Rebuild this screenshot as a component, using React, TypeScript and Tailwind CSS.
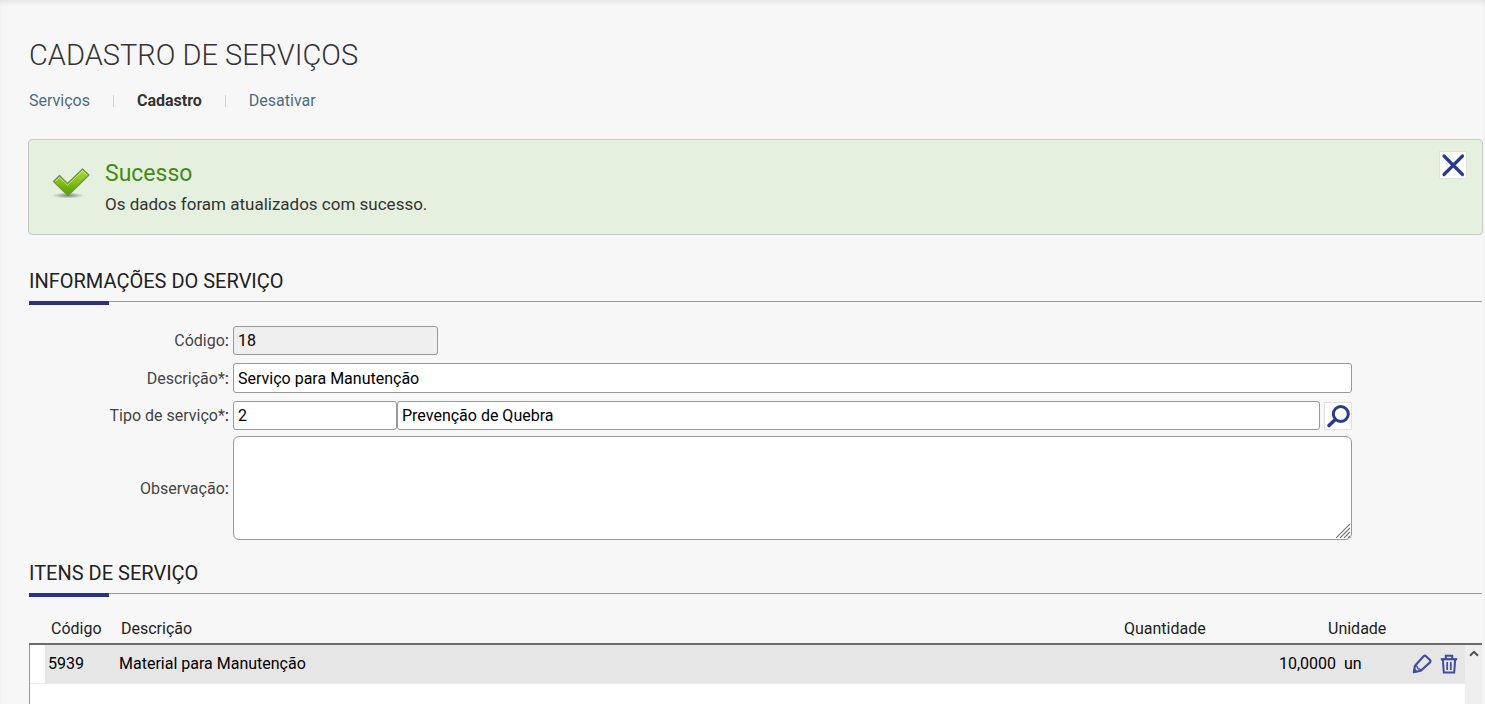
import { useState } from "react";

const tabs = [
  { label: "Serviços", active: false },
  { label: "Cadastro", active: true },
  { label: "Desativar", active: false },
];

const items = [
  { code: "5939", description: "Material para Manutenção", quantity: "10,0000", unit: "un" },
];

const inputClass =
  "rounded-[3px] border border-[#999] bg-white px-1 text-base leading-5 text-black outline-none";

function CheckIcon() {
  return (
    <svg width="40" height="34" viewBox="0 0 40 34" aria-hidden="true">
      <defs>
        <linearGradient id="check" x1="0" y1="0" x2="0" y2="1">
          <stop offset="0" stopColor="#b5dc4a" />
          <stop offset="0.5" stopColor="#84bf16" />
          <stop offset="1" stopColor="#559c05" />
        </linearGradient>
        <radialGradient id="shade">
          <stop offset="0" stopColor="#5f6b58" stopOpacity="0.8" />
          <stop offset="1" stopColor="#5f6b58" stopOpacity="0" />
        </radialGradient>
      </defs>
      <ellipse cx="17" cy="29.5" rx="16" ry="3" fill="url(#shade)" />
      <path
        d="M2.5 15.5 L8.5 9.5 L16.5 17.5 L31.5 3 L38 9 L17 29.5 Z"
        fill="url(#check)"
        stroke="#6b9645"
        strokeWidth="1.2"
        strokeLinejoin="round"
      />
      <path
        d="M4.5 15.5 L8.5 11.5 L16.5 19.2 L31.5 4.7 L36 9"
        fill="none"
        stroke="#d3ec86"
        strokeWidth="0.8"
      />
    </svg>
  );
}

function CloseIcon() {
  return (
    <svg width="26" height="26" viewBox="0 0 26 26" aria-hidden="true">
      <path
        d="M4 4 L22.5 22.5 M22.5 4 L4 22.5"
        stroke="#2b3990"
        strokeWidth="3.2"
        strokeLinecap="round"
      />
    </svg>
  );
}

function SearchIcon() {
  return (
    <svg width="26" height="26" viewBox="0 0 26 26" aria-hidden="true">
      <circle cx="15.8" cy="11" r="7.5" fill="none" stroke="#2b3990" strokeWidth="3" />
      <path d="M9.8 17 L4 22.5" stroke="#2b3990" strokeWidth="3.6" strokeLinecap="round" />
    </svg>
  );
}

function PencilIcon() {
  return (
    <svg
      width="20"
      height="20"
      viewBox="0 0 20 20"
      fill="none"
      stroke="#3f4ca0"
      strokeWidth="2.1"
      strokeLinejoin="round"
      aria-hidden="true"
    >
      <path d="M1.8 18.2 L3 11.8 L11.6 2.2 Q12.8 1.2 14 2.2 L18 6 Q19 7.2 18 8.4 L8.8 16.8 Z" />
      <path d="M3 11.8 L5.2 12.4 L5.8 14.6 L8 15.2 L8.8 16.8" strokeWidth="1.4" />
      <path d="M1.8 18.2 L2.4 14.8 L5.2 17.4 Z" fill="#3f4ca0" strokeWidth="1" />
    </svg>
  );
}

function TrashIcon() {
  return (
    <svg
      width="18"
      height="20"
      viewBox="0 0 18 20"
      fill="none"
      stroke="#3f4ca0"
      strokeWidth="2"
      aria-hidden="true"
    >
      <path d="M0.8 5.2 H17.2" strokeWidth="2.2" />
      <path d="M5.8 5 V1.8 H12.2 V5" />
      <path d="M2.8 5 L3.8 18.6 H14.2 L15.2 5" />
      <path d="M7.2 8 V16 M10.8 8 V16" strokeWidth="1.7" />
    </svg>
  );
}

function SectionTitle({ children }: { children: string }) {
  return (
    <div>
      <h2 className="text-xl leading-6 text-[#222]">{children}</h2>
      <div className="mt-2 h-1 border-t border-[#999]">
        <div className="-mt-px h-1 w-20 bg-[#2a3187]" />
      </div>
    </div>
  );
}

function Label({ htmlFor, children }: { htmlFor: string; children: string }) {
  return (
    <label htmlFor={htmlFor} className="pt-px text-right text-base leading-5 text-[#444]">
      {children}
      <b className="font-medium">:</b>
    </label>
  );
}

export default function App() {
  const [showAlert, setShowAlert] = useState(true);

  return (
    <main className="flex min-h-screen flex-col bg-[#f7f7f7] pt-[37px] pr-[2px] pl-7 font-[Roboto,sans-serif] shadow-[inset_0_4px_6px_-3px_rgba(0,0,0,0.12)]">
      <header className="pl-px">
        <h1 className="text-[29px] leading-9 font-light text-[#333]">CADASTRO DE SERVIÇOS</h1>
        <nav className="mt-[18px] flex h-5 items-center text-base leading-5">
          {tabs.map((tab, i) => (
            <div key={tab.label} className="flex items-center">
              {i > 0 && <span className="mx-[23px] h-3 w-px bg-[#d5d5d5]" />}
              <a href="#" className={tab.active ? "font-bold text-[#333]" : "text-[#4d6c80]"}>
                {tab.label}
              </a>
            </div>
          ))}
        </nav>
      </header>

      {showAlert && (
        <div
          role="status"
          className="mt-7 flex h-24 items-start rounded-sm border border-[#c6c9c4] bg-[#e5f0df] pr-[15px] pl-[22px]"
        >
          <div className="mt-[26px]">
            <CheckIcon />
          </div>
          <div className="ml-[14px] flex-1 pt-5">
            <h3 className="text-[23px] leading-7 text-[#458a14]">Sucesso</h3>
            <p className="mt-1 text-[17px] leading-6 text-[#333]">
              Os dados foram atualizados com sucesso.
            </p>
          </div>
          <button
            type="button"
            aria-label="Fechar"
            onClick={() => setShowAlert(false)}
            className="mt-[11px] border border-[#e2e2e2] bg-white"
          >
            <CloseIcon />
          </button>
        </div>
      )}

      <section className="mt-[34px] px-px">
        <SectionTitle>INFORMAÇÕES DO SERVIÇO</SectionTitle>
        <form className="mt-[21px] mr-[130px] grid grid-cols-[200px_1fr] items-center gap-x-1">
          <Label htmlFor="codigo">Código</Label>
          <input
            id="codigo"
            defaultValue="18"
            readOnly
            className="h-[29px] w-[205px] rounded-[3px] border border-[#999] bg-[#efefef] px-1 text-base leading-5 text-black outline-none"
          />

          <div className="col-span-2 mt-2 grid grid-cols-subgrid items-center">
            <Label htmlFor="descricao">Descrição*</Label>
            <input
              id="descricao"
              defaultValue="Serviço para Manutenção"
              className={`h-[30px] w-full ${inputClass}`}
            />
          </div>

          <div className="col-span-2 mt-2 grid grid-cols-subgrid items-center">
            <Label htmlFor="tipo">Tipo de serviço*</Label>
            <div className="flex items-center">
              <input id="tipo" defaultValue="2" className={`h-[29px] w-[164px] ${inputClass}`} />
              <input
                aria-label="Nome do tipo de serviço"
                defaultValue="Prevenção de Quebra"
                className={`h-[29px] min-w-0 flex-1 ${inputClass}`}
              />
              <button
                type="button"
                aria-label="Pesquisar"
                className="ml-1 border border-[#e2e2e2] bg-white"
              >
                <SearchIcon />
              </button>
            </div>
          </div>

          <div className="col-span-2 mt-[6px] grid grid-cols-subgrid items-center">
            <Label htmlFor="observacao">Observação</Label>
            <div className="relative">
              <textarea
                id="observacao"
                className="block h-[104px] w-full resize-none rounded-md border border-[#999] bg-white p-1 text-base leading-5 outline-none"
              />
              <svg
                width="14"
                height="14"
                viewBox="0 0 14 14"
                className="pointer-events-none absolute right-[2px] bottom-[2px]"
                aria-hidden="true"
              >
                <path
                  d="M0 14 L14 0 M4 14 L14 4 M8 14 L14 8 M12 14 L14 12"
                  stroke="#777"
                  strokeWidth="1.2"
                />
              </svg>
            </div>
          </div>
        </form>
      </section>

      <section className="mt-[21px] flex flex-1 flex-col px-px">
        <SectionTitle>ITENS DE SERVIÇO</SectionTitle>
        <table className="mt-[18px] w-full table-fixed text-base leading-5 text-[#222]">
          <thead>
            <tr className="h-7">
              <th className="w-[92px] pl-[22px] text-left font-normal">Código</th>
              <th className="text-left font-normal">Descrição</th>
              <th className="w-[122px] text-left font-normal">Quantidade</th>
              <th className="w-[236px] pl-[82px] text-left font-normal">Unidade</th>
            </tr>
          </thead>
        </table>
        <div className="flex min-h-14 flex-1 items-stretch border-t-2 border-[#6b6b6b]">
          <div className="flex-1 border-l border-[#999] bg-white">
            <table
              aria-label="Itens de serviço"
              className="w-full table-fixed border-b border-[#ececec] text-base leading-5 text-black"
            >
              <colgroup>
                <col className="w-[15px]" />
                <col className="w-[74px]" />
                <col />
                <col className="w-[120px]" />
                <col className="w-[60px]" />
                <col className="w-[69px]" />
              </colgroup>
              <tbody>
                {items.map((item) => (
                  <tr key={item.code} className="h-[38px]">
                    <td />
                    <td className="bg-[#e6e6e6] pl-[3px]">{item.code}</td>
                    <td className="bg-[#e6e6e6]">{item.description}</td>
                    <td className="bg-[#e6e6e6] text-right">{item.quantity}</td>
                    <td className="bg-[#e6e6e6] pl-2">{item.unit}</td>
                    <td className="bg-[#e6e6e6]">
                      <div className="flex items-center justify-end gap-2 pr-[7px]">
                        <button type="button" aria-label="Editar">
                          <PencilIcon />
                        </button>
                        <button type="button" aria-label="Excluir">
                          <TrashIcon />
                        </button>
                      </div>
                    </td>
                  </tr>
                ))}
              </tbody>
            </table>
          </div>
          <div className="flex w-[17px] justify-center bg-[#efefef]">
            <button type="button" aria-label="Rolar para cima" className="h-4">
              <svg width="10" height="7" viewBox="0 0 10 7" fill="none" aria-hidden="true">
                <path d="M1 5.8 L5 1.8 L9 5.8" stroke="#505050" strokeWidth="2" />
              </svg>
            </button>
          </div>
        </div>
      </section>
    </main>
  );
}
